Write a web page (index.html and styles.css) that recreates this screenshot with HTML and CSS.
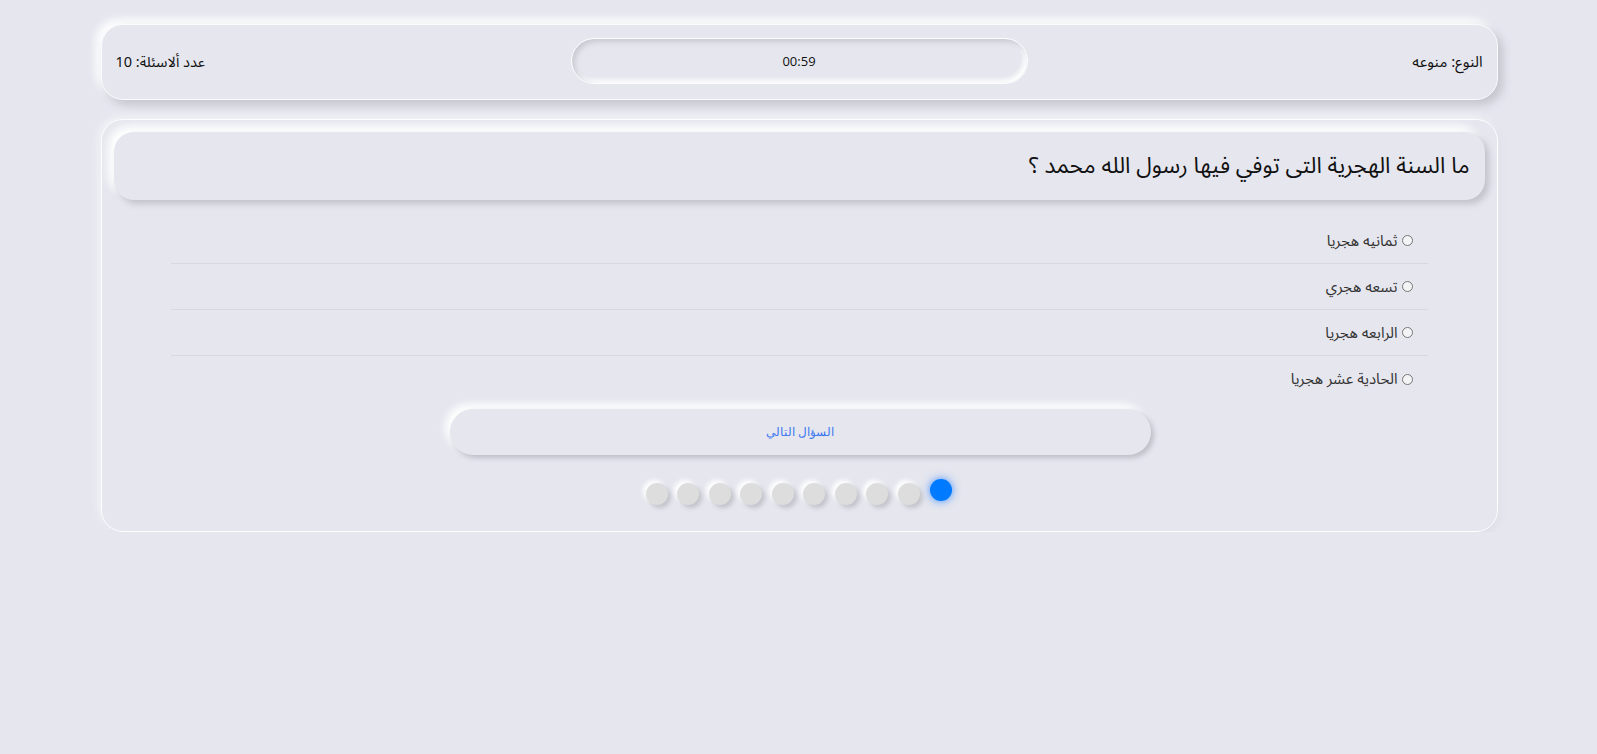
FILE: index.html
```html
<!DOCTYPE html>
<html lang="ar" dir="rtl">
<head>
<meta charset="utf-8">
<title>اختبار</title>
<link rel="stylesheet" href="styles.css">
</head>
<body>
<div class="container">
  <div class="info-card">
    <div class="info-type">النوع: منوعه</div>
    <div class="timer">00:59</div>
    <div class="info-count">عدد ألاسئلة: 10</div>
  </div>

  <div class="quiz-card">
    <div class="question">ما السنة الهجرية التى توفي فيها رسول الله محمد ؟</div>
    <ul class="options">
      <li class="option"><span class="radio"></span><span class="label">ثمانيه هجريا</span></li>
      <li class="option"><span class="radio"></span><span class="label">تسعه هجري</span></li>
      <li class="option"><span class="radio"></span><span class="label">الرابعه هجريا</span></li>
      <li class="option"><span class="radio"></span><span class="label">الحادية عشر هجريا</span></li>
    </ul>
    <div class="btn-row"><button class="next-btn">السؤال التالي</button></div>
    <div class="dots">
      <span class="dot active"></span>
      <span class="dot"></span>
      <span class="dot"></span>
      <span class="dot"></span>
      <span class="dot"></span>
      <span class="dot"></span>
      <span class="dot"></span>
      <span class="dot"></span>
      <span class="dot"></span>
      <span class="dot"></span>
    </div>
  </div>
</div>
</body>
</html>
```
FILE: styles.css
```css
* { box-sizing: border-box; }
html, body {
  margin: 0;
  padding: 0;
  background: #e5e6ee;
  font-family: "Noto Sans Arabic", "DejaVu Sans", "Noto Sans", sans-serif;
  color: #111;
}
.container {
  width: 1398px;
  margin: 0 auto;
  padding-top: 24px;
  padding-left: 1px;
}
.info-card {
  height: 76px;
  border: 1px solid #fbfbfd;
  border-radius: 22px;
  background: #e5e6ee;
  box-shadow: 5px 5px 10px #c4c5cd, -5px -5px 10px #ffffff;
  display: grid;
  grid-template-columns: 1fr 457px 1fr;
  align-items: center;
  padding: 0 14px 0 14px;
  font-size: 14.5px;
}
.info-type { text-align: right; font-size: 15px; }
.info-count { text-align: left; }
.timer {
  height: 46px;
  border-radius: 23px;
  border: 1px solid #fdfdfe;
  box-shadow: inset 3px 3px 5px #c9cad2, inset -3px -3px 5px #ffffff;
  display: flex;
  align-items: center;
  justify-content: center;
  font-family: "Open Sans", "Noto Sans", sans-serif;
  font-size: 13px;
  direction: ltr;
  margin-top: -2px;
}
.quiz-card {
  margin-top: 19px;
  border: 1px solid #fdfdfe;
  border-radius: 22px;
  background: #e5e6ee;
  box-shadow: -3px -3px 8px #f3f3f7, 2px 2px 6px #dcdde5;
  padding: 12px 12px 26px 12px;
}
.question {
  height: 68px;
  border-radius: 20px;
  background: #e5e6ee;
  box-shadow: 4px 4px 6px #c2c3cb, -6px -6px 10px #ffffff;
  display: flex;
  align-items: center;
  padding-right: 15px;
  font-size: 22.5px;
  color: #111;
}
.options {
  list-style: none;
  margin: 18px 57px 0 57px;
  padding: 0;
}
.option {
  height: 46px;
  display: flex;
  align-items: center;
  padding-right: 15px;
  border-bottom: 1px solid #d8d9e0;
  font-size: 15px;
  color: #333;
}
.option:last-child { border-bottom: none; }
.radio {
  width: 11px;
  height: 11px;
  border-radius: 50%;
  border: 1px solid #777;
  background: #f4f4f6;
  margin-left: 4px;
  flex: none;
}
.btn-row {
  display: flex;
  justify-content: center;
  margin-top: 7px;
}
.next-btn {
  width: 701px;
  height: 46px;
  border-radius: 23px;
  border: none;
  background: #e5e6ee;
  box-shadow: 3px 3px 5px #bebfc7, -5px -5px 8px #ffffff;
  color: #3d78f0;
  font-family: "DejaVu Serif", "Liberation Serif", serif;
  font-size: 12px;
  margin-left: 2px;
}
.dots {
  display: flex;
  justify-content: center;
  align-items: flex-start;
  gap: 9.5px;
  margin-top: 25px;
  height: 25px;
}
.dot {
  width: 22px;
  height: 22px;
  border-radius: 50%;
  background: #dddddd;
  box-shadow: 3px 3px 4px #c3c4cb, -3px -3px 5px #ffffff;
  margin-top: 3px;
}
.dot.active {
  background: #007bff;
  box-shadow: 0 0 8px #3d8dff;
  margin-top: -1px;
  margin-left: 1px;
}
```
